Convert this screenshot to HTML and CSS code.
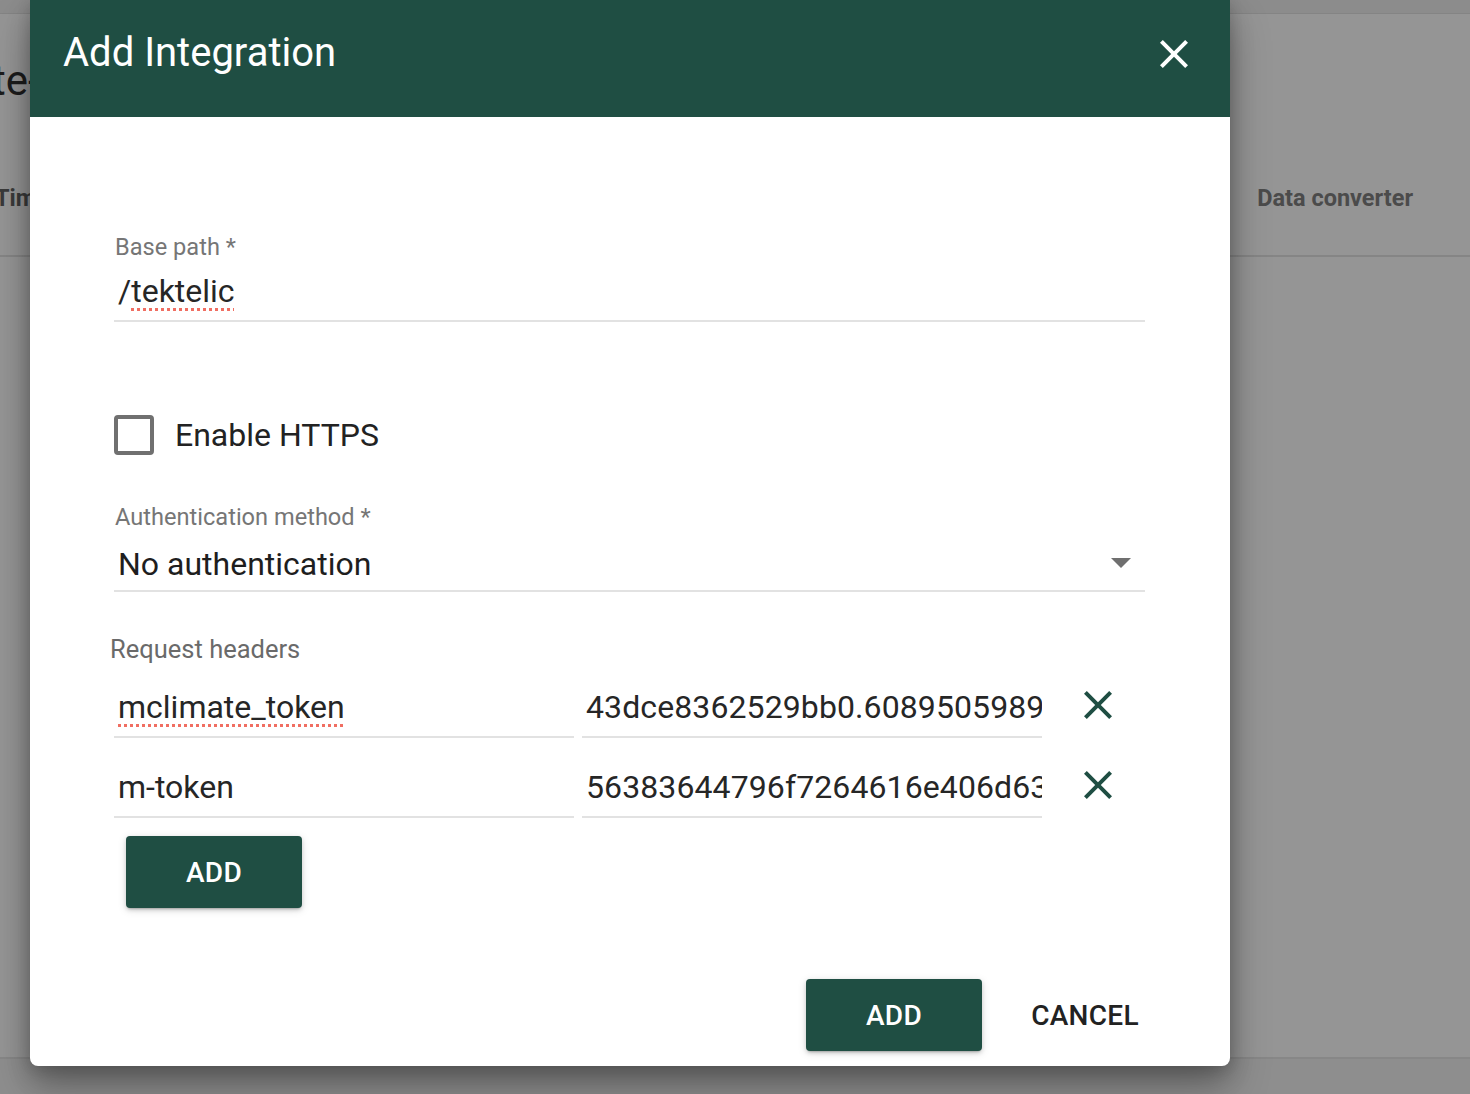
FILE: index.html
```html
<!DOCTYPE html>
<html lang="en">
<head>
<meta charset="utf-8">
<title>Add Integration</title>
<link rel="stylesheet" href="styles.css">
</head>
<body>
<div class="page">
  <div class="topstrip"></div>
  <div class="page-title">te-</div>
  <div class="table-head">
    <span class="th th-time">Time</span>
    <span class="th th-conv">Data converter</span>
  </div>
  <div class="page-fill"></div>
  <div class="page-bottom"></div>
</div>

<div class="dialog">
  <div class="dialog-header">
    <h2 class="dialog-title">Add Integration</h2>
    <button class="icon-btn close-btn" aria-label="Close">
      <svg viewBox="0 0 24 24" width="48" height="48"><path d="M19 6.41 17.59 5 12 10.59 6.41 5 5 6.41 10.59 12 5 17.59 6.41 19 12 13.41 17.59 19 19 17.59 13.41 12z" fill="#ffffff"/></svg>
    </button>
  </div>

  <div class="dialog-body">
    <div class="field field-base">
      <div class="field-label">Base path *</div>
      <div class="field-input">/<span class="misspelled">tektelic</span></div>
    </div>

    <div class="checkbox-row">
      <span class="checkbox"></span>
      <span class="checkbox-label">Enable HTTPS</span>
    </div>

    <div class="field field-select">
      <div class="field-label">Authentication method *</div>
      <div class="field-input select-input">
        <span class="select-value">No authentication</span>
        <span class="select-arrow"></span>
      </div>
    </div>

    <div class="headers-label">Request headers</div>

    <div class="header-row">
      <div class="hfield"><span class="misspelled">mclimate_token</span></div>
      <div class="hfield hvalue"><span>43dce8362529bb0.6089505989</span></div>
      <button class="icon-btn del-btn" aria-label="Remove">
        <svg viewBox="0 0 24 24" width="48" height="48"><path d="M19 6.41 17.59 5 12 10.59 6.41 5 5 6.41 10.59 12 5 17.59 6.41 19 12 13.41 17.59 19 19 17.59 13.41 12z" fill="#1f4e43"/></svg>
      </button>
    </div>
    <div class="header-row">
      <div class="hfield">m-token</div>
      <div class="hfield hvalue"><span>56383644796f7264616e406d63</span></div>
      <button class="icon-btn del-btn" aria-label="Remove">
        <svg viewBox="0 0 24 24" width="48" height="48"><path d="M19 6.41 17.59 5 12 10.59 6.41 5 5 6.41 10.59 12 5 17.59 6.41 19 12 13.41 17.59 19 19 17.59 13.41 12z" fill="#1f4e43"/></svg>
      </button>
    </div>

    <button class="btn btn-raised add-header">ADD</button>
  </div>

  <div class="dialog-actions">
    <button class="btn btn-raised">ADD</button>
    <button class="btn btn-flat">CANCEL</button>
  </div>
</div>
</body>
</html>
```

FILE: styles.css
```css
* { box-sizing: border-box; }

html, body {
  margin: 0;
  padding: 0;
  height: 100%;
}

body {
  background: #959595;
  font-family: Roboto, "Liberation Sans", Arial, sans-serif;
  overflow: hidden;
  position: relative;
}

/* ---------- background page (dimmed) ---------- */
.page {
  height: 1094px;
  display: flex;
  flex-direction: column;
}

.topstrip {
  height: 14px;
  background: #8c8c8c;
  border-bottom: 1px solid #848484;
  flex: none;
}

.page-title {
  font-size: 42px;
  color: #1c1c1c;
  margin-left: -8px;
  margin-top: 43px;
  line-height: 48px;
  height: 48px;
}

.table-head {
  margin-top: 67px;
  height: 85px;
  border-bottom: 2px solid #858585;
  display: flex;
  align-items: flex-start;
  padding-top: 12px;
}

.th {
  font-size: 23.5px;
  line-height: 28px;
  font-weight: 700;
  color: #444;
}

.th-time {
  margin-left: -5px;
  color: #3a3a3a;
}

.th-conv {
  margin-left: auto;
  margin-right: 57px;
  color: #4b4b4b;
}

.page-fill { flex: 1; }

.page-bottom {
  height: 37px;
  border-top: 2px solid #878787;
  background: #8e8e8e;
}

/* ---------- dialog ---------- */
.dialog {
  position: absolute;
  left: 30px;
  top: 0;
  width: 1200px;
  height: 1066px;
  background: #fff;
  border-radius: 0 0 8px 8px;
  box-shadow: 0 22px 40px rgba(0,0,0,0.28), 0 10px 24px rgba(0,0,0,0.18), 0 0 14px rgba(0,0,0,0.12);
  display: flex;
  flex-direction: column;
}

.dialog-header {
  height: 117px;
  background: #1f4e43;
  display: flex;
  align-items: center;
  padding: 0 32px 0 33px;
  flex: none;
}

.dialog-title {
  margin: 0;
  font-weight: 400;
  font-size: 40px;
  color: #fff;
  flex: 1;
  line-height: 1;
  margin-top: -12px;
}

.icon-btn {
  border: 0;
  background: transparent;
  padding: 0;
  display: flex;
  align-items: center;
  justify-content: center;
  cursor: pointer;
}

.close-btn {
  width: 48px;
  height: 48px;
  margin-top: -10px;
}

.dialog-body {
  padding: 116px 85px 0 84px;
  flex: 1;
}

.field-label {
  font-size: 23.6px;
  line-height: 28px;
  color: #767676;
  padding-left: 1px;
}

.field-input {
  font-size: 32px;
  line-height: 40px;
  color: #262626;
  padding: 0 4px 9px;
  border-bottom: 2px solid #e2e2e2;
}

.field-base .field-input {
  margin-top: 10px;
}

.misspelled {
  text-decoration: underline dotted #f06e62;
  text-decoration-thickness: 3px;
  text-underline-offset: 6px;
}

.checkbox-row {
  margin-top: 93px;
  height: 40px;
  display: flex;
  align-items: center;
}

.checkbox {
  width: 40px;
  height: 40px;
  border: 4px solid #707070;
  border-radius: 4px;
  flex: none;
}

.checkbox-label {
  margin-left: 21px;
  font-size: 32px;
  line-height: 40px;
  color: #222;
}

.field-select {
  margin-top: 48px;
}

.select-input {
  margin-top: 13px;
  display: flex;
  align-items: center;
  padding-bottom: 6px;
  color: #1e1e1e;
}

.select-value { flex: 1; }

.select-arrow {
  width: 0;
  height: 0;
  border-left: 10px solid transparent;
  border-right: 10px solid transparent;
  border-top: 10px solid #6f6f6f;
  margin-right: 10px;
  margin-top: -3px;
}

.headers-label {
  margin-top: 43px;
  margin-left: -4px;
  font-size: 25.5px;
  line-height: 28px;
  color: #6a6a6a;
}

.header-row {
  display: flex;
  align-items: flex-start;
  gap: 8px;
  margin-top: 24px;
}

.header-row + .header-row {
  margin-top: 29px;
}

.hfield {
  width: 460px;
  font-size: 32px;
  line-height: 40px;
  color: #262626;
  padding: 0 4px 9px;
  border-bottom: 2px solid #e2e2e2;
  white-space: nowrap;
  overflow: hidden;
}

.hvalue {
  padding-right: 3px;
  letter-spacing: 0.1px;
}

.del-btn {
  width: 48px;
  height: 48px;
  margin-left: 24px;
  margin-top: -6px;
}

.btn {
  font-family: Roboto, "Liberation Sans", Arial, sans-serif;
  font-size: 28px;
  font-weight: 500;
  border: 0;
  border-radius: 4px;
  width: 176px;
  height: 72px;
  cursor: pointer;
  letter-spacing: 0.3px;
}

.btn-raised {
  background: #1f4e43;
  color: #fff;
  box-shadow: 0 3px 2px -2px rgba(0,0,0,0.2), 0 2px 4px rgba(0,0,0,0.14), 0 2px 10px rgba(0,0,0,0.12);
}

.btn-flat {
  background: transparent;
  color: #222;
}

.add-header {
  margin-top: 18px;
  margin-left: 12px;
  display: block;
}

.dialog-actions {
  display: flex;
  justify-content: flex-end;
  gap: 15px;
  padding: 0 57px 15px 0;
  flex: none;
}
```
